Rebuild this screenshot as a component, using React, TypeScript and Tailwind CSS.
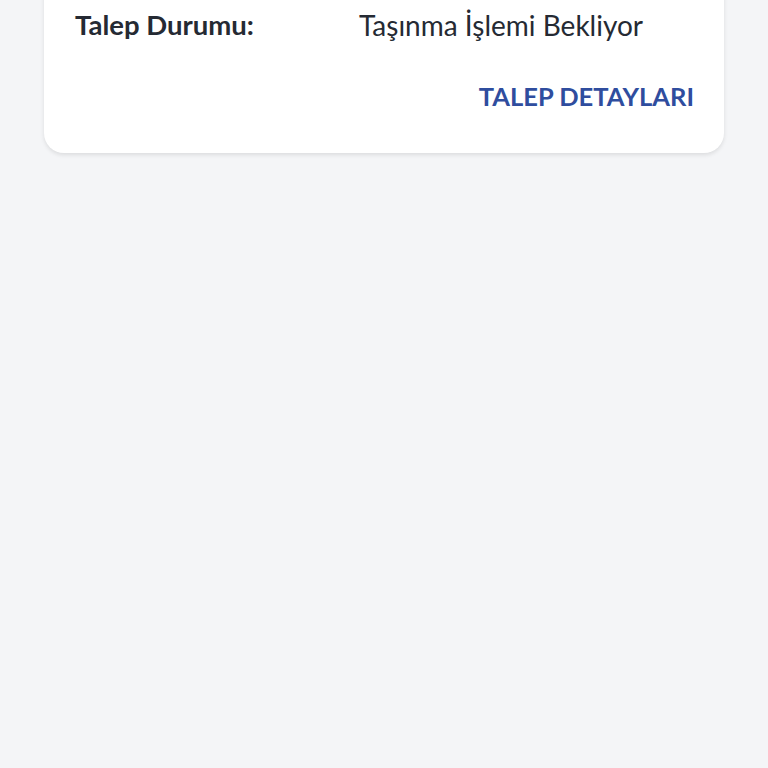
import React from "react";

export default function App() {
  return (
    <div className="flex min-h-[768px] w-full flex-col overflow-hidden bg-[#f4f5f7] px-[44px]" style={{ fontFamily: "Lato, 'Noto Sans', sans-serif" }}>
      <div className="-mt-[40px] rounded-[20px] bg-white pt-[47px] pb-[42px] pl-[31px] pr-[30px] shadow-[0_2px_4px_rgba(0,0,0,0.10)]">
        <div className="flex items-center text-[#252a33] leading-[36px]">
          <span className="w-[284px] text-[27.5px] font-bold">Talep Durumu:</span>
          <span className="text-[28px] font-normal">Taşınma İşlemi Bekliyor</span>
        </div>
        <div className="mt-[38px] flex justify-end">
          <span className="text-[25.5px] font-bold leading-[30px] text-[#2f4d9e]">TALEP DETAYLARI</span>
        </div>
      </div>
    </div>
  );
}
